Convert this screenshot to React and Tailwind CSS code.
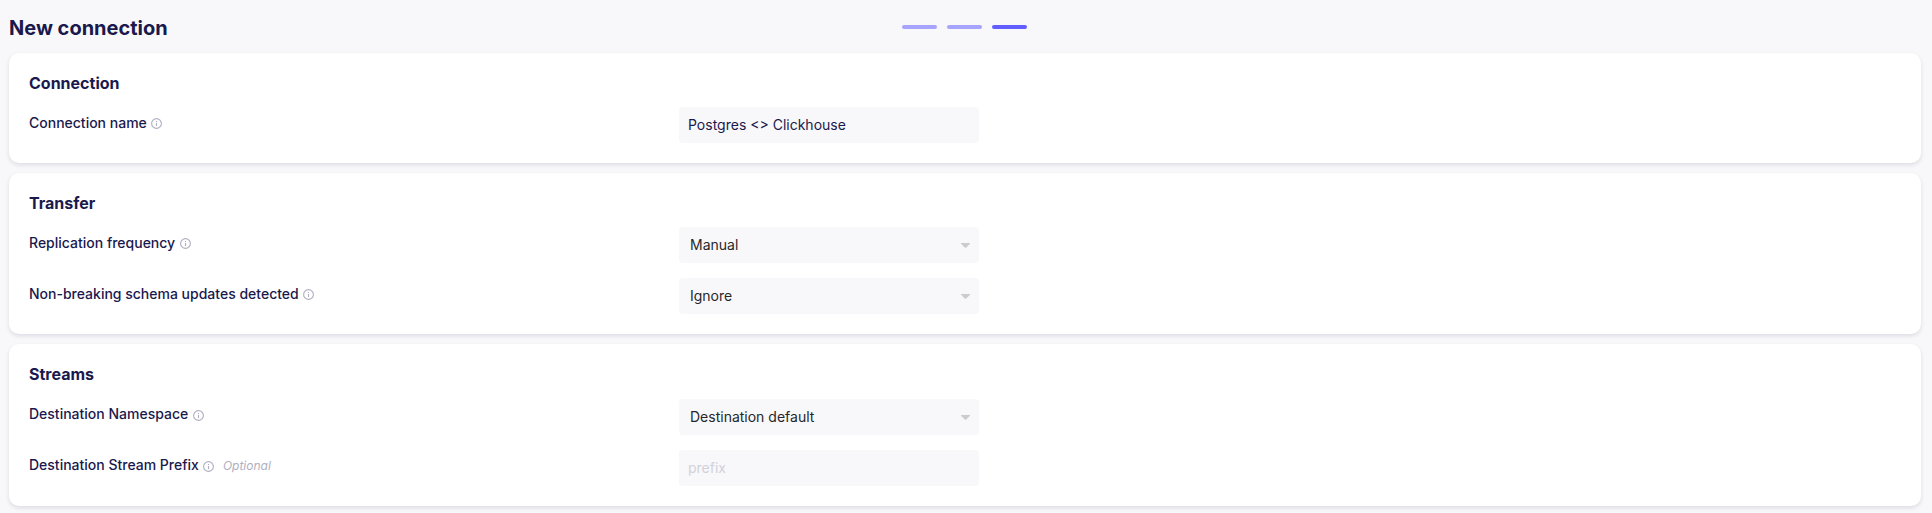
function InfoIcon() {
  return (
    <svg className="block h-[11px] w-[11px] text-[#afafc1]" viewBox="0 0 11 11" fill="none">
      <circle cx="5.5" cy="5.5" r="4.9" stroke="currentColor" strokeWidth="1.1" />
      <path d="M5.5 5v3.1" stroke="currentColor" strokeWidth="1.1" />
      <path d="M5.5 3v1.1" stroke="currentColor" strokeWidth="1.1" />
    </svg>
  );
}

function Card({ title, children, className = "" }) {
  return (
    <section
      className={`rounded-[10px] bg-white px-5 pt-5 pb-5 shadow-[0_2px_4px_rgba(26,25,77,0.12)] ${className}`}
    >
      <h2 className="text-base leading-[21px] font-bold">{title}</h2>
      {children}
    </section>
  );
}

function Row({ label, optional, labelOffset = "pt-[7px]", children, className = "" }) {
  return (
    <div className={`flex h-9 items-start ${className}`}>
      <div className="flex w-[650px] shrink-0 items-start">
        <span className={`text-sm leading-[17px] font-medium ${labelOffset}`}>{label}</span>
        <span className="ml-[4.5px] pt-[11px]">
          <InfoIcon />
        </span>
        {optional && (
          <span className="ml-[8.5px] pt-[8px] text-xs leading-[15px] text-[#afafc1] italic">
            Optional
          </span>
        )}
      </div>
      {children}
    </div>
  );
}

function Input(props) {
  return (
    <input
      className="h-9 w-[300px] rounded-[4px] bg-[#f8f8fa] px-[9px] pb-[2px] text-sm text-[#1a194d] outline-none placeholder:text-[#d1d1db]"
      {...props}
    />
  );
}

function Select({ value }) {
  return (
    <button
      type="button"
      className="flex h-9 w-[300px] items-center justify-between rounded-[4px] bg-[#f8f8fa] pr-[9px] pl-[11px] text-sm text-[#27272a]"
    >
      <span>{value}</span>
      <svg className="h-[5px] w-[9px] text-[#cccccc]" viewBox="0 0 9 5" fill="currentColor">
        <path d="M0 0h9v.7L5 4.8H4L0 .7z" />
      </svg>
    </button>
  );
}

export default function App() {
  return (
    <main className="h-[513px] overflow-hidden bg-[#f8f8fa] pr-[11px] pl-[9px] font-['Inter',sans-serif] text-[#1a194d]">
      <header className="grid h-[53px] grid-cols-[893px_1fr] items-start">
        <h1 className="pt-4 text-xl leading-6 font-bold">New connection</h1>
        <div className="flex gap-[10px] pt-[25px]">
          <span className="h-1 w-[35px] rounded-[2px] bg-[#a6a4ff]" />
          <span className="h-1 w-[35px] rounded-[2px] bg-[#a6a4ff]" />
          <span className="h-1 w-[35px] rounded-[2px] bg-[#615eff]" />
        </div>
      </header>
      <div className="flex flex-col gap-[10px]">
        <Card title="Connection" className="h-[110px]">
          <Row label="Connection name" className="mt-[13px]">
            <Input defaultValue="Postgres <> Clickhouse" />
          </Row>
        </Card>
        <Card title="Transfer" className="h-[161px]">
          <Row label="Replication frequency" className="mt-[13px]">
            <Select value="Manual" />
          </Row>
          <Row label="Non-breaking schema updates detected" className="mt-[15px]">
            <Select value="Ignore" />
          </Row>
        </Card>
        <Card title="Streams" className="h-[162px]">
          <Row label="Destination Namespace" labelOffset="pt-[6px]" className="mt-[14px]">
            <Select value="Destination default" />
          </Row>
          <Row
            label="Destination Stream Prefix"
            labelOffset="pt-[6px]"
            optional
            className="mt-[15px]"
          >
            <Input placeholder="prefix" />
          </Row>
        </Card>
      </div>
    </main>
  );
}
